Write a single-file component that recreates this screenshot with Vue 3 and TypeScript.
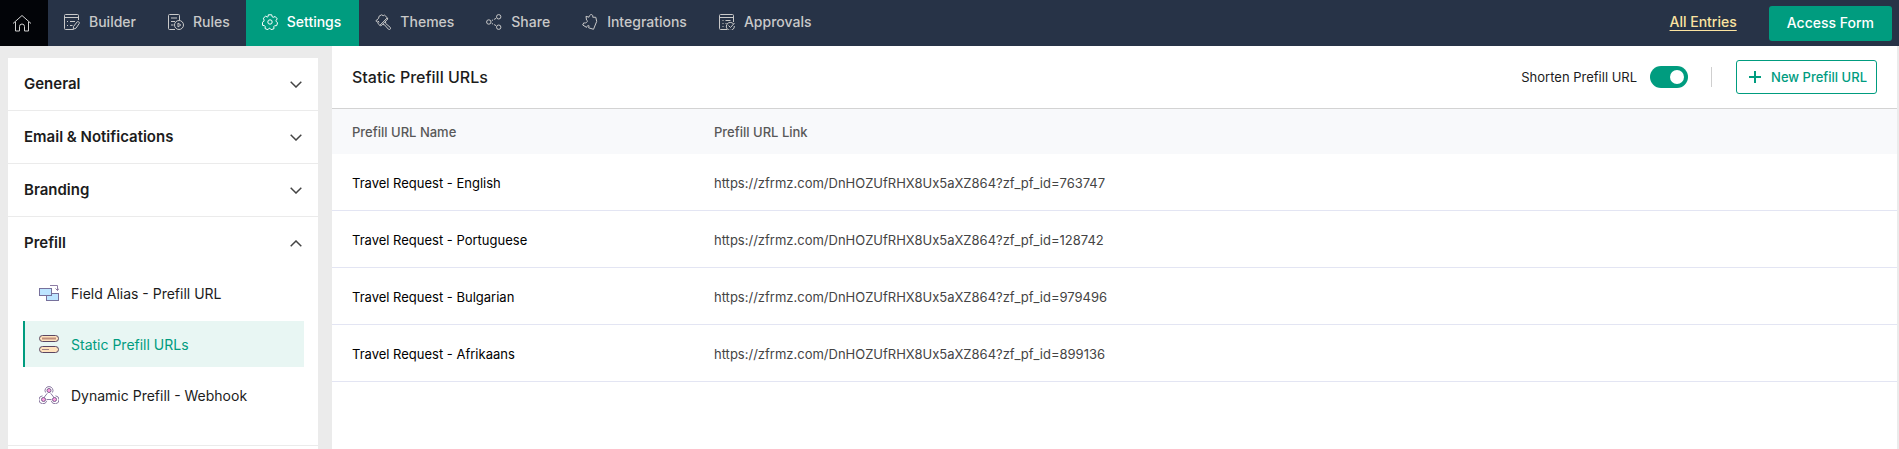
<script setup lang="ts">
import { ref } from 'vue'

interface Tab { id: string; label: string }
interface Item { id: string; label: string }
interface Section { id: string; label: string; items: Item[] }
interface Entry { name: string; link: string }

const tabs: Tab[] = [
  { id: 'builder', label: 'Builder' },
  { id: 'rules', label: 'Rules' },
  { id: 'settings', label: 'Settings' },
  { id: 'themes', label: 'Themes' },
  { id: 'share', label: 'Share' },
  { id: 'integrations', label: 'Integrations' },
  { id: 'approvals', label: 'Approvals' },
]

const sections: Section[] = [
  { id: 'general', label: 'General', items: [] },
  { id: 'email', label: 'Email & Notifications', items: [] },
  { id: 'branding', label: 'Branding', items: [] },
  {
    id: 'prefill',
    label: 'Prefill',
    items: [
      { id: 'alias', label: 'Field Alias - Prefill URL' },
      { id: 'static', label: 'Static Prefill URLs' },
      { id: 'dynamic', label: 'Dynamic Prefill - Webhook' },
    ],
  },
]

const base = 'https://zfrmz.com/DnHOZUfRHX8Ux5aXZ864?zf_pf_id='
const entries: Entry[] = [
  { name: 'Travel Request - English', link: base + '763747' },
  { name: 'Travel Request - Portuguese', link: base + '128742' },
  { name: 'Travel Request - Bulgarian', link: base + '979496' },
  { name: 'Travel Request - Afrikaans', link: base + '899136' },
]

const activeTab = ref('settings')
const openSection = ref('prefill')
const activeItem = ref('static')
const shorten = ref(true)

function toggleSection(id: string) {
  openSection.value = openSection.value === id ? '' : id
}
</script>

<template>
  <div class="page">
    <header class="topbar">
      <a class="home" href="#" aria-label="Home">
        <svg class="home-icon" viewBox="0 0 20 18" aria-hidden="true">
          <path d="M1 9.5 10 1.5l9 8M3.5 8v9h4v-4.5a2.5 2.5 0 0 1 5 0V17h4V8" />
        </svg>
      </a>
      <nav class="tabs" aria-label="Form">
        <a
          v-for="tab in tabs"
          :key="tab.id"
          href="#"
          class="tab"
          :class="{ active: tab.id === activeTab }"
          @click.prevent="activeTab = tab.id"
        >
          <svg class="tab-icon" viewBox="0 0 16 16" aria-hidden="true">
            <template v-if="tab.id === 'builder'">
              <path d="M9.5 15.5h-8a1 1 0 0 1-1-1v-13a1 1 0 0 1 1-1h12a1 1 0 0 1 1 1V6M.5 3.5h14M3 7.5h1M6 7.5h5M3 11.5h1M6 11.5h2.5" />
              <path d="m9.5 12.500 3.700-4.700c.7-.8 2.700.5 2.100 1.500l-3.300 4.900-2.700 1z" />
            </template>
            <template v-else-if="tab.id === 'rules'">
              <path d="M7 15.500H1.500a1 1 0 0 1-1-1v-13a1 1 0 0 1 1-1h9a1 1 0 0 1 1 1V6M3 4h6M3 7.500h4M3 11h2.500" />
              <circle cx="11" cy="11" r="4.500" />
              <path d="m10 9 2.800 2L10 13z" />
            </template>
            <template v-else-if="tab.id === 'settings'">
              <circle cx="8" cy="8" r="2.200" />
              <path d="M6.300.8h3.400l.5 2 1 .5 2-.8 2 2.300-1.200 1.800.3 1.100 1.300 1-.9 2.900-2.200.2-.7.8.2 2.100-2.900 1-1.300-1.500H7.200l-1.300 1.500-2.800-1.100.1-2.100-.7-.8-1.900-.3-.2-3.100 1.500-1 .2-1.200-.8-1.900L3.600 2.200l1.700.8.800-.4z" />
            </template>
            <template v-else-if="tab.id === 'themes'">
              <path d="M.8 6.800 3.500 4.500l.6-2.300L6.500.8l1.700.9 1.300-.6 2.800 2.700-7.500 7.500-1.600-1.500-.4-1.700zM12.300 3.800l.5 1.200-7 7-1-.7M10.500 7.200l.2 2.300 4.500 3.800a1.300 1.300 0 0 1-1.800 1.900L9.500 10.800l-1.900-.4M2.800 6.800l1.500 1.500" />
            </template>
            <template v-else-if="tab.id === 'share'">
              <circle cx="2.800" cy="8" r="2.200" />
              <circle cx="12.700" cy="2.800" r="2.200" />
              <circle cx="12.700" cy="13.200" r="2.200" />
              <path d="m5.800 6.600 1.300-.7m1-.5 1.900-1M5.800 9.400l1.300.7m1 .5 1.900 1" />
            </template>
            <template v-else-if="tab.id === 'integrations'">
              <path d="M4.500 6 4 2.300l3 .9c.4-1.300.8-2.600 2.300-2.600 1.400 0 1.600 1.200 1.400 2.600l3.100.1.900 4.100-3.200 7.900-4.900-1.500.5-2c-.8-.6-1.400-.4-1.900.3l-.6 1.300L.7 11l1.100-2.200c1.300.4 2.500.1 3.300-.9.6-.8.4-1.500-.6-1.900z" />
            </template>
            <template v-else>
              <path d="M8 15.500H1.500a1 1 0 0 1-1-1v-13a1 1 0 0 1 1-1h12a1 1 0 0 1 1 1V8M.5 3.500h14M3.500 6.500h1M6.500 6.500h5M3.500 9.500h1M6.500 9.500h1M3.500 12.500h1" />
              <path d="M14.500 10a4 4 0 1 0 .8 2M9.500 11.500l2 2 4-4.500" />
            </template>
          </svg>
          <span>{{ tab.label }}</span>
        </a>
      </nav>
      <a class="all-entries" href="#">All Entries</a>
      <button class="access" type="button">Access Form</button>
    </header>

    <div class="body">
      <aside class="sidebar">
        <section v-for="section in sections" :key="section.id" class="section">
          <button
            class="section-head"
            type="button"
            :aria-expanded="openSection === section.id"
            @click="toggleSection(section.id)"
          >
            <span>{{ section.label }}</span>
            <svg class="chevron" :class="{ up: openSection === section.id }" viewBox="0 0 12 7" aria-hidden="true">
              <path d="m.7.8 5.300 5.200L11.300.8" />
            </svg>
          </button>
          <ul v-if="section.items.length && openSection === section.id" class="items">
            <li v-for="item in section.items" :key="item.id">
              <a
                href="#"
                class="item"
                :class="{ active: item.id === activeItem }"
                @click.prevent="activeItem = item.id"
              >
                <svg class="item-icon" viewBox="0 0 20 18" aria-hidden="true">
                  <template v-if="item.id === 'alias'">
                    <rect class="blue" x="7.500" y="9.500" width="12" height="7" />
                    <rect class="blue" x=".5" y="4.500" width="12" height="7" />
                    <path class="line" d="M11 1.500h7.500v5M16.500 4.500l2 2 1.500-2" />
                  </template>
                  <template v-else-if="item.id === 'static'">
                    <rect class="peach" x=".5" y=".5" width="19" height="6" rx="3" />
                    <rect class="peach" x=".5" y="11.500" width="19" height="6" rx="3" />
                    <path class="mark" d="M3 3.500h14" />
                    <path class="dash" d="M3 14.500h7" />
                  </template>
                  <template v-else>
                    <path class="line" d="M8.300 7.300 4.600 12M11.700 7.300l3.700 4.700M7.500 13.500h5M6.500 6.500A4 4 0 1 1 13.500 6.500M3.500 9.800a4 4 0 1 0 4.300 5M16.500 9.800a4 4 0 1 1-4.300 5" />
                    <circle class="pink" cx="10" cy="4.500" r="2" />
                    <circle class="pink" cx="4.500" cy="13.500" r="2" />
                    <circle class="pink" cx="15.500" cy="13.500" r="2" />
                  </template>
                </svg>
                <span class="item-label">{{ item.label }}</span>
              </a>
            </li>
          </ul>
        </section>
      </aside>

      <main class="main">
        <div class="titlebar">
          <h1>Static Prefill URLs</h1>
          <label class="shorten">
            <span>Shorten Prefill URL</span>
            <input v-model="shorten" class="switch" type="checkbox" role="switch" />
          </label>
          <span class="divider"></span>
          <button class="new" type="button">
            <svg class="plus" viewBox="0 0 12 12" aria-hidden="true"><path d="M6 0v12M0 6h12" /></svg>
            <span>New Prefill URL</span>
          </button>
        </div>
        <table class="grid">
          <thead>
            <tr>
              <th scope="col" class="name">Prefill URL Name</th>
              <th scope="col">Prefill URL Link</th>
            </tr>
          </thead>
          <tbody>
            <tr v-for="entry in entries" :key="entry.name">
              <td class="name">{{ entry.name }}</td>
              <td class="link">{{ entry.link }}</td>
            </tr>
          </tbody>
        </table>
      </main>
    </div>
  </div>
</template>

<style>
body {
  margin: 0;
}
</style>

<style scoped>
* {
  box-sizing: border-box;
}

.page {
  display: flex;
  flex-direction: column;
  min-height: 100vh;
  font: 14px/20px Inter, "Liberation Sans", sans-serif;
  color: #1c1c1c;
  background: #ebebeb;
}

button {
  font: inherit;
  cursor: pointer;
}

svg {
  flex: none;
  fill: none;
  stroke: currentColor;
}

.topbar {
  display: flex;
  align-items: center;
  height: 46px;
  padding-right: 7px;
  background: #273347;
}

.home {
  display: flex;
  align-items: center;
  justify-content: center;
  width: 48px;
  height: 100%;
  padding-right: 4px;
  color: #cfcfcf;
  background: #020408;
}

.home-icon {
  width: 20px;
  height: 18px;
}

.tabs {
  display: flex;
  flex: 1;
  height: 100%;
}

.tab {
  display: flex;
  align-items: center;
  gap: 9px;
  padding: 0 16px 2px;
  font-size: 14px;
  font-weight: 500;
  color: #c9c9c9;
  text-decoration: none;
}

.tab.active {
  padding: 0 18px 2px 16px;
  color: #fff;
  background: #009c7f;
}

.tab-icon {
  width: 16px;
  height: 16px;
}

.all-entries {
  margin-right: 32px;
  padding-bottom: 2px;
  font-weight: 500;
  color: #fbe3a0;
  text-underline-offset: 3px;
}

.access {
  height: 35px;
  padding: 0 18px;
  font-size: 14px;
  font-weight: 500;
  color: #fff;
  background: #009c7f;
  border: 0;
  border-radius: 3px;
}

.body {
  display: flex;
  flex: 1;
  padding-right: 2px;
}

.sidebar {
  flex: none;
  width: 310px;
  margin: 12px 14px 0 8px;
  background: #fff;
}

.section {
  border-bottom: 1px solid #ebebeb;
}

.section-head {
  display: flex;
  align-items: center;
  justify-content: space-between;
  width: 100%;
  height: 52px;
  padding: 0 16px;
  font-size: 15px;
  font-weight: 600;
  color: inherit;
  text-align: left;
  background: none;
  border: 0;
}

.chevron {
  width: 12px;
  height: 7px;
  stroke: #444;
  stroke-width: 1.5;
}

.chevron.up {
  transform: rotate(180deg);
}

.items {
  display: flex;
  flex-direction: column;
  gap: 5px;
  margin: 0;
  padding: 1px 14px 27px 15px;
  list-style: none;
}

.item {
  display: flex;
  align-items: center;
  gap: 12px;
  height: 46px;
  padding-left: 14px;
  color: inherit;
  text-decoration: none;
  border-left: 2px solid transparent;
}

.item.active {
  color: #009c7f;
  background: #e8f6f3;
  border-left-color: #009c7f;
}

.item-icon {
  width: 20px;
  height: 18px;
}

.item-label {
  padding-top: 2px;
}

.blue {
  fill: #bde5ff;
  stroke: #77719c;
}

.peach {
  fill: #ffe2bd;
  stroke: #5b4661;
}

.mark {
  stroke: #c08f7c;
  stroke-width: 2;
}

.dash {
  stroke: #a08083;
}

.line {
  stroke: #8c7ba3;
}

.pink {
  fill: #ff9ee2;
  stroke: #79628d;
}

.main {
  flex: 1;
  min-width: 0;
  background: #fff;
}

.titlebar {
  display: flex;
  align-items: center;
  height: 63px;
  padding: 0 20px;
  border-bottom: 1px solid #d3d3d3;
}

h1 {
  flex: 1;
  margin: 0;
  font-size: 16px;
  font-weight: 500;
}

.shorten {
  display: flex;
  align-items: center;
  gap: 13px;
  font-size: 13px;
}

.switch {
  display: flex;
  align-items: center;
  width: 38px;
  height: 22px;
  margin: 0;
  padding: 0 4px;
  appearance: none;
  background: #b5b5b5;
  border-radius: 11px;
  cursor: pointer;
}

.switch::before {
  width: 14px;
  height: 14px;
  background: #fff;
  border-radius: 50%;
  content: "";
}

.switch:checked {
  justify-content: flex-end;
  background: #009c7f;
}

.divider {
  width: 1px;
  height: 20px;
  margin: 0 24px 0 23px;
  background: #cfcfcf;
}

.new {
  display: flex;
  align-items: center;
  gap: 10px;
  height: 34px;
  padding: 0 9px 0 12px;
  font-size: 13px;
  font-weight: 500;
  color: #009c7f;
  background: #fff;
  border: 1px solid #009c7f;
  border-radius: 3px;
}

.plus {
  width: 12px;
  height: 12px;
  stroke-width: 2;
}

.grid {
  width: 100%;
  table-layout: fixed;
  border-spacing: 0;
  font-size: 13px;
}

th,
td {
  padding: 1px 20px 0;
  text-align: left;
}

th {
  height: 45px;
  font-weight: 500;
  color: #585858;
  background: #f8f9fb;
}

th.name {
  width: 362px;
}

td {
  height: 57px;
  color: #000;
  border-bottom: 1px solid #e3e5f3;
}

td.link {
  color: #444;
}
</style>
